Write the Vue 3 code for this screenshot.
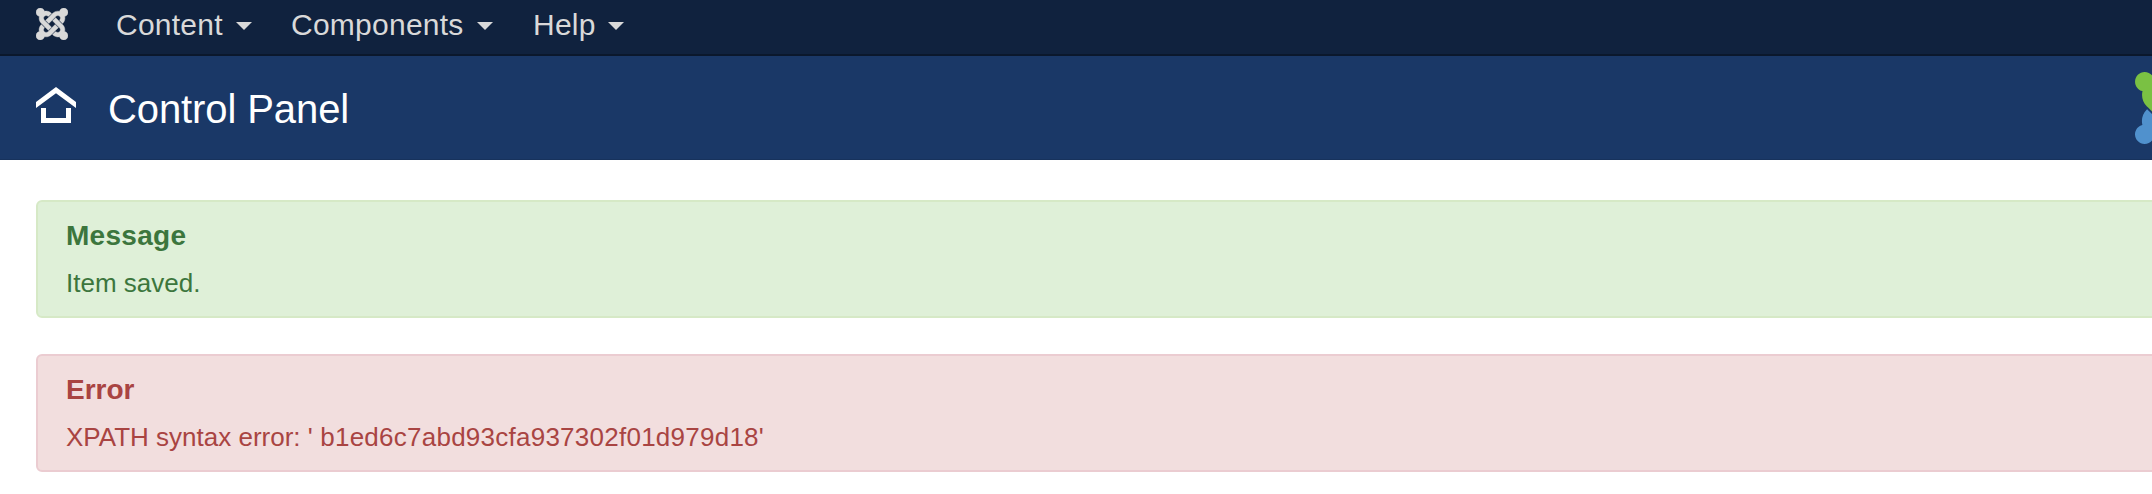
<script setup>
const strand =
  'M16.719 14.759L14.22 17.26l-2.37 2.37-.462.466c-1.368 1.365-3.297 1.83-5.047 1.397-.327 1.424-1.604 2.49-3.13 2.49C1.438 23.983 0 22.547 0 20.771c0-1.518 1.055-2.789 2.469-3.123-.446-1.76.016-3.705 1.396-5.08l.179-.18 2.37 2.37-.184.181c-.769.779-.769 2.024 0 2.789.771.78 2.022.78 2.787 0l.465-.465 2.367-2.371 2.502-2.506 2.368 2.373z'
const turns = [0, 90, 180, 270]
const brand = ['#5091cd', '#7ac143', '#f9a541', '#f44321']
const menu = [
  { label: 'Content', cls: 'content' },
  { label: 'Components', cls: 'components' },
  { label: 'Help', cls: 'help' },
]
const alerts = [
  { type: 'success', title: 'Message', text: 'Item saved.' },
  { type: 'error', title: 'Error', text: "XPATH syntax error: '", detail: " b1ed6c7abd93cfa937302f01d979d18'" },
]
</script>

<template>
  <div class="page">
    <nav class="navbar">
      <svg class="mark" viewBox="0 0 24 24">
        <path v-for="t in turns" :key="t" :d="strand" :transform="`rotate(${t} 12 12)`" />
      </svg>
      <a v-for="m in menu" :key="m.label" class="item" :class="m.cls">
        <span>{{ m.label }}</span><i class="caret"></i>
      </a>
    </nav>
    <header class="header">
      <svg class="home" viewBox="0 0 40 36">
        <path d="M20 0L40 15v6L20 6.2 0 21v-6z" />
        <path d="M5 21h5v10h20V21h5v15H5z" />
      </svg>
      <h1>Control Panel</h1>
      <svg class="logo" viewBox="0 0 24 24">
        <path v-for="(t, i) in turns" :key="t" :d="strand" :fill="brand[i]" :transform="`rotate(${t} 12 12)`" />
      </svg>
    </header>
    <main>
      <section v-for="a in alerts" :key="a.type" class="alert" :class="a.type">
        <h4>{{ a.title }}</h4>
        <p><span>{{ a.text }}</span><span v-if="a.detail" class="detail">{{ a.detail }}</span></p>
      </section>
    </main>
  </div>
</template>

<style>
body {
  margin: 0;
  background: #fff;
}
</style>

<style scoped>
.page {
  height: 494px;
  overflow: hidden;
  font-family: "Liberation Sans", Arial, sans-serif;
}
.navbar {
  box-sizing: border-box;
  height: 56px;
  padding-left: 36px;
  display: flex;
  align-items: flex-start;
  background: #10223e;
  border-bottom: 2px solid #0b182c;
  color: #d9d9d9;
}
.mark {
  width: 32px;
  height: 32px;
  margin-top: 8px;
  fill: #d9d9d9;
  stroke: #d9d9d9;
  stroke-width: 0.3;
}
.item {
  display: flex;
  align-items: flex-start;
  justify-content: space-between;
  font-size: 30px;
  line-height: 50px;
  letter-spacing: 0.25px;
}
.content { width: 136px; margin: 0 39px 0 48px; }
.components { width: 202px; margin-right: 40px; }
.help { width: 91px; }
.caret {
  margin-top: 22px;
  border: 8px solid transparent;
  border-top-color: #d9d9d9;
  border-bottom: 0;
}
.header {
  box-sizing: border-box;
  height: 104px;
  padding-left: 36px;
  display: flex;
  align-items: flex-start;
  overflow: hidden;
  background: #1a3867;
  border-bottom: 1px solid #17325c;
}
.home {
  width: 40px;
  height: 36px;
  margin-top: 31px;
  fill: #fff;
}
h1 {
  width: 300px;
  margin: 29px 0 0 32px;
  font-size: 40px;
  line-height: 48px;
  font-weight: 400;
  letter-spacing: -0.1px;
  color: #fff;
}
.logo {
  flex: none;
  width: 72px;
  height: 72px;
  margin: 16px -55px 0 auto;
}
main {
  padding: 40px 0 0 36px;
  display: flex;
  flex-direction: column;
  gap: 36px;
}
.alert {
  box-sizing: border-box;
  height: 118px;
  margin-right: -20px;
  padding: 15px 28px;
  border: 2px solid;
  border-radius: 6px;
}
.success {
  color: #3c763d;
  background: #dff0d8;
  border-color: #d6e9c6;
}
.error {
  color: #a94442;
  background: #f2dede;
  border-color: #ebccd1;
}
h4 {
  margin: 0;
  font-size: 28px;
  line-height: 38px;
}
.success h4 {
  letter-spacing: 0.3px;
}
p {
  margin: 10px 0 0;
  font-size: 26px;
  line-height: 36px;
}
.detail {
  letter-spacing: 0.25px;
}
</style>
